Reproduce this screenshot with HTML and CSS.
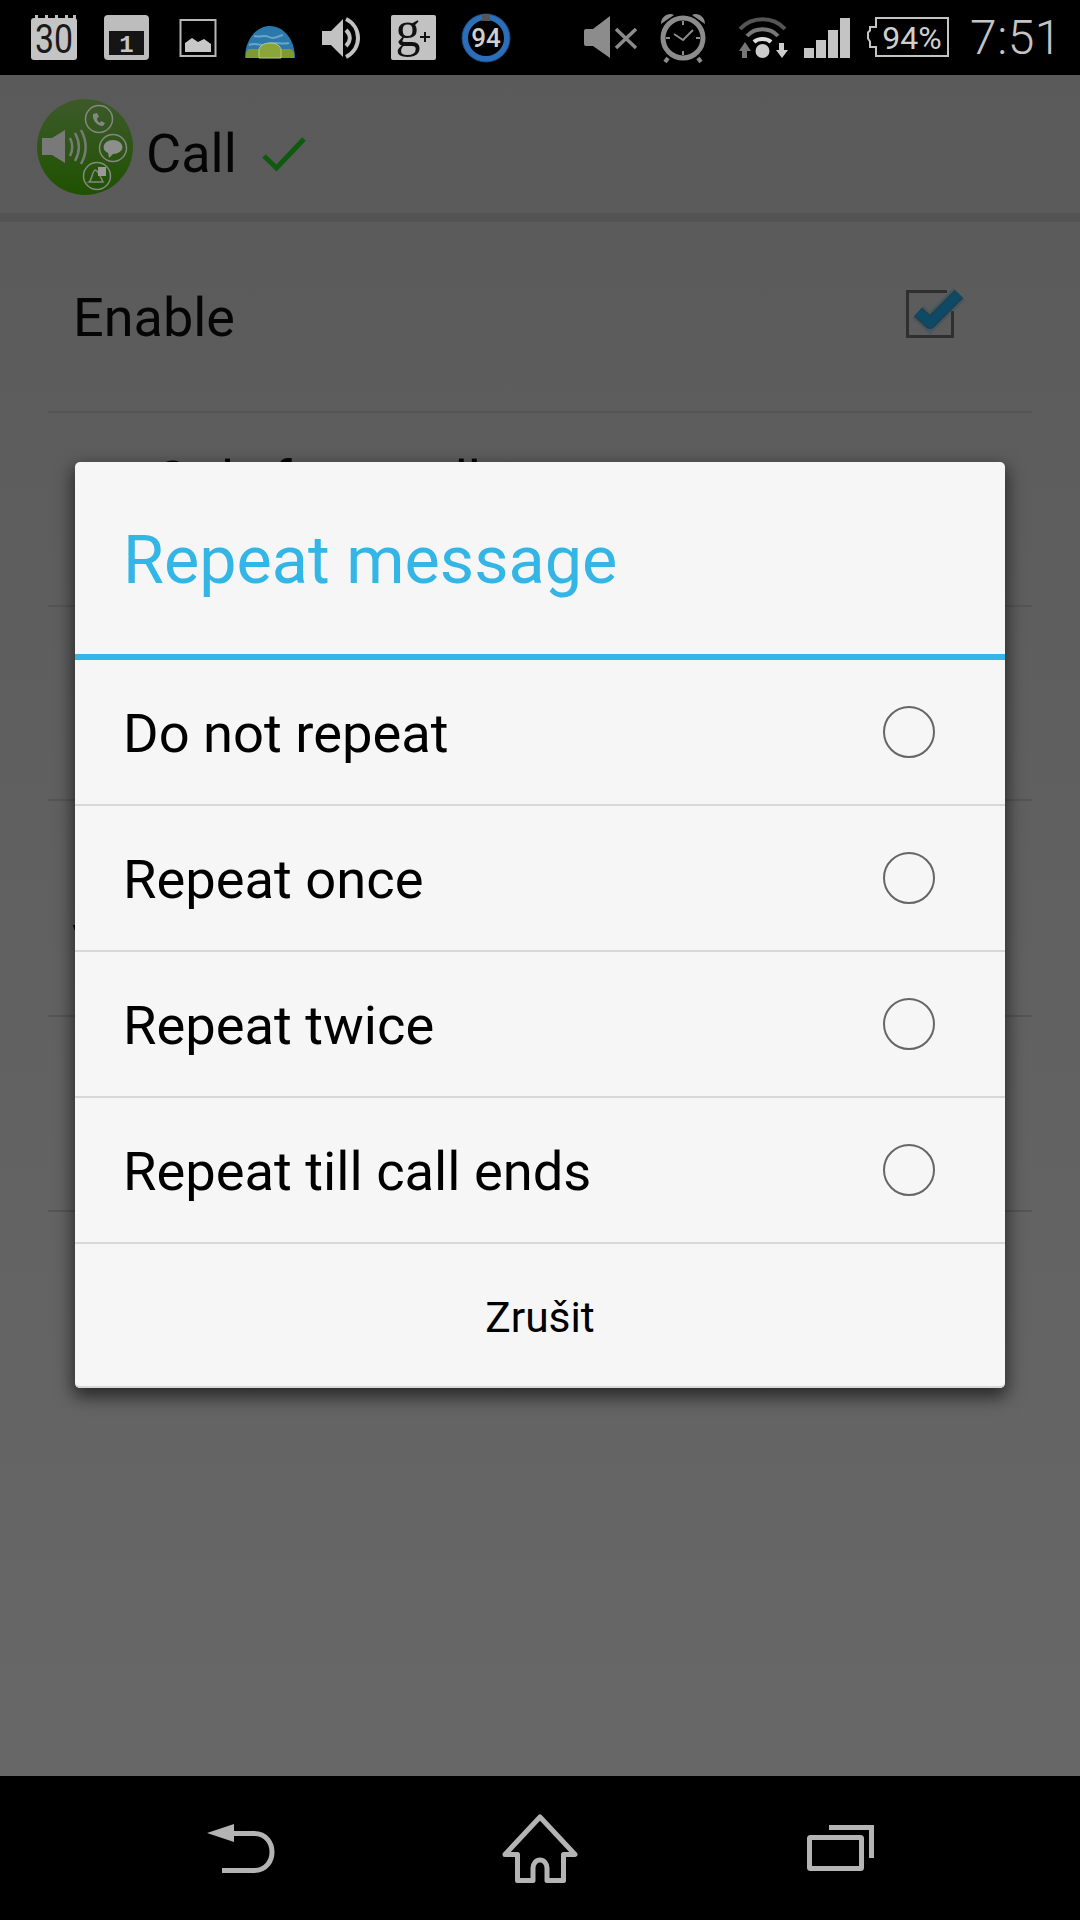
FILE: index.html
```html
<!DOCTYPE html>
<html>
<head>
    <meta charset="UTF-8">
    <meta name="viewport" content="width=device-width, initial-scale=1.0">
    <link rel="stylesheet" href="styles.css">
</head>
<body>
<div class="phone">
    <div class="status-bar">
        <div class="status-group">
            <svg width="72" height="75" viewBox="0 0 72 75">
                <path d="M17 15h3v4h-3zM27 15h3v4h-3zM37 15h3v4h-3zM47 15h3v4h-3zM55 15h3v4h-3z" fill="#bdbdbd"/>
                <rect x="13" y="18" width="46" height="42" rx="3" fill="#c4c4c4"/>
                <text x="36" y="53" class="svg-cal" textLength="38" lengthAdjust="spacingAndGlyphs">30</text>
            </svg>
            <svg width="72" height="75" viewBox="0 0 72 75">
                <rect x="14" y="15" width="45" height="45" rx="4" fill="#bdbdbd"/>
                <rect x="19" y="31" width="35" height="24" fill="#151515"/>
                <text x="36.5" y="52" class="svg-one">1</text>
            </svg>
            <svg width="72" height="75" viewBox="0 0 72 75">
                <rect x="18.500" y="20" width="35" height="36" fill="none" stroke="#b8b8b8" stroke-width="2"/>
                <path d="M23 52V43l7-5 6 4 6-3 7 5v8z" fill="#c8c8c8"/>
            </svg>
            <svg width="72" height="75" viewBox="0 0 72 75">
                <path d="M11 58C11 40 22 26 36 26S61 40 61 58z" fill="#2a78ac"/>
                <path d="M20 36c6 2 10-2 15 1s9-1 14-2M15 45c7-3 12 2 19-1s14 1 21-1" stroke="#6aa5c4" stroke-width="2" fill="none"/>
                <path d="M12 58v-4c0-3 2-5 5-5h38c3 0 5 2 5 5v4z" fill="#7f9a34"/>
                <path d="M25 58V50c0-4 5-7 11-7s11 3 11 7v8z" fill="#8aa53a" stroke="#b7c98a" stroke-width="1"/>
            </svg>
            <svg width="72" height="75" viewBox="0 0 72 75">
                <path d="M16 31h9l12-12v38L25 45h-9z" fill="#c2c2c2"/>
                <path d="M40 30c5 5 5 11 0 16" fill="none" stroke="#c2c2c2" stroke-width="4"/>
                <path d="M40 19c16 8 16 30 0 38" fill="none" stroke="#c2c2c2" stroke-width="4"/>
            </svg>
            <svg width="72" height="75" viewBox="0 0 72 75">
                <rect x="13" y="15" width="45" height="45" rx="2" fill="#c2c2c2"/>
                <text x="30" y="46" class="svg-g">g</text>
                <path d="M42 37h10M47 32v10" stroke="#111" stroke-width="2"/>
            </svg>
            <svg width="72" height="75" viewBox="0 0 72 75">
                <circle cx="36" cy="38" r="21" fill="none" stroke="#2b6fbb" stroke-width="6"/>
                <circle cx="36" cy="38" r="24" fill="none" stroke="#1d4a7c" stroke-width="1"/>
                <path d="M32 14h8v7h-8z" fill="#555"/>
                <text x="36" y="47" class="svg-batt">94</text>
            </svg>
        </div>
        <div class="status-group">
            <svg width="72" height="75" viewBox="0 0 72 75">
                <path d="M9 31q0-2 2-2h7l17-13v42L18 46h-7q-2 0-2-2z" fill="#8c8c8c"/>
                <path d="M41 29l20 19M61 29L41 48" stroke="#8c8c8c" stroke-width="3.500"/>
            </svg>
            <svg width="72" height="75" viewBox="0 0 72 75">
                <circle cx="36" cy="38" r="20" fill="none" stroke="#8c8c8c" stroke-width="5"/>
                <path d="M14 24c0-8 8-12 13-9zM58 24c0-8-8-12-13-9z" fill="#8c8c8c"/>
                <path d="M21 58l-3 4M51 58l3 4" stroke="#8c8c8c" stroke-width="4"/>
                <path d="M27 34l9 6 10-10M36 21v4M36 51v4M19 38h4M49 38h4" fill="none" stroke="#8c8c8c" stroke-width="2"/>
            </svg>
            <svg width="85" height="75" viewBox="0 0 85 75">
                <path d="M21 29c12-13 33-13 45 0" fill="none" stroke="#555" stroke-width="4"/>
                <path d="M28 36c8-9 23-9 31 0" fill="none" stroke="#777" stroke-width="4"/>
                <path d="M35 42c4-4 13-4 17 0" fill="none" stroke="#ddd" stroke-width="4"/>
                <circle cx="43.500" cy="51" r="7" fill="#ccc"/>
                <path d="M26 42l6 9h-4v7h-5v-7h-3z" fill="#777"/>
                <path d="M60 43h5v7h4l-6 8-6-8h3z" fill="#ccc"/>
            </svg>
            <svg class="signal" width="46" height="75" viewBox="0 0 46 75">
                <path d="M0 48h10v10H0zM12 40h10v18H12zM24 30h10v28H24zM36 18h10v40H36z" fill="#c4c4c4"/>
            </svg>
            <svg width="117" height="75" viewBox="0 0 117 75">
                <path d="M26 18h72v38H26V47h-6v-5.500l-2-3v-6l2-2V27h6z" fill="none" stroke="#c4c4c4" stroke-width="2"/>
                <text x="62" y="49" class="svg-pct">94%</text>
            </svg>
            <span class="clock">7:51</span>
        </div>
    </div>

    <div class="screen">
        <div class="app-bar">
            <svg width="96" height="96" viewBox="0 0 96 96">
                <defs>
                    <linearGradient id="appGreen" x1="0" y1="0" x2="0" y2="1">
                        <stop offset="0" stop-color="#3d5a2a"/>
                        <stop offset="1" stop-color="#1f5200"/>
                    </linearGradient>
                </defs>
                <circle cx="48" cy="48" r="48" fill="url(#appGreen)"/>
                <path d="M5 39h10l13-8v33l-13-8H5z" fill="#797979"/>
                <path d="M33 39c3 6 3 12 0 18M38 34c5 9 5 19 0 28M44 31c6 11 6 23 0 34" fill="none" stroke="#797979" stroke-width="2.500"/>
                <g fill="none" stroke="#868686" stroke-width="1.500">
                    <circle cx="62" cy="20" r="13.500"/>
                    <circle cx="76" cy="49" r="13.500"/>
                    <circle cx="60" cy="77" r="13.500"/>
                </g>
                <path d="M56 15c-1 6 4 12 10 12l2-3-4-2-1 2c-2-1-3-3-3-5l2-1-2-4z" fill="#868686"/>
                <ellipse cx="76" cy="48" rx="9.500" ry="7" fill="#8e8e8e"/>
                <path d="M71 53l1 6 5-5z" fill="#8e8e8e"/>
                <path d="M52 83c3-2 3-10 6-12 3 0 5 6 8 12z" fill="none" stroke="#868686" stroke-width="1.500"/>
                <rect x="61" y="68" width="8" height="9" fill="#999"/>
            </svg>
            <span class="app-title">Call</span>
            <svg class="app-check" width="46" height="38" viewBox="0 0 46 38">
                <path d="M3 20l12.500 12L43 3" fill="none" stroke="#0f5a0f" stroke-width="5"/>
            </svg>
        </div>

        <div class="settings">
            <div class="setting">
                <span class="setting-label setting-label-main">Enable</span>
                <svg class="setting-check" width="70" height="70" viewBox="0 0 70 70">
                    <path d="M47 10.500H7.500v45h45V30" fill="none" stroke="#2f2f2f" stroke-width="3"/>
                    <path d="M18 31l12 11 29-29" fill="none" stroke="#0f4f6e" stroke-opacity=".3" stroke-width="17"/>
                    <path d="M18 31l12 11 29-29" fill="none" stroke="#2a3c46" stroke-width="12" stroke-linejoin="round"/>
                    <path d="M18 31l12 11 29-29" fill="none" stroke="#0c4a68" stroke-width="9"/>
                </svg>
            </div>
            <div class="setting setting-peek">
                <span class="setting-label">Only for a call</span>
            </div>
            <div class="setting"></div>
            <div class="setting setting-low">
                <span class="setting-label">Volume</span>
            </div>
            <div class="setting"></div>
        </div>
    </div>

    <div class="nav-bar">
        <svg width="120" height="144" viewBox="0 0 120 144">
            <path d="M27 57l27-9v18z" fill="#b4b4b4"/>
            <path d="M52 57.500H74C87 57.500 92 68 92 76S87 94.500 74 94.500H42" fill="none" stroke="#b4b4b4" stroke-width="5"/>
        </svg>
        <svg width="120" height="144" viewBox="0 0 120 144">
            <path d="M60 41L95 78.500H83.500V104.500H67V92A7 8 0 0 0 53 92V104.500H37.500V78.500H25Z" fill="none" stroke="#b4b4b4" stroke-width="5" stroke-linejoin="round"/>
        </svg>
        <svg width="120" height="144" viewBox="0 0 120 144">
            <rect x="29.500" y="61.500" width="52" height="31" rx="1" fill="none" stroke="#b4b4b4" stroke-width="5"/>
            <path d="M49 51.500H91.500V82" fill="none" stroke="#b4b4b4" stroke-width="5"/>
        </svg>
    </div>

    <div class="dialog">
        <div class="dialog-title">Repeat message</div>
        <div class="dialog-option"><span>Do not repeat</span><i class="radio"></i></div>
        <div class="dialog-option"><span>Repeat once</span><i class="radio"></i></div>
        <div class="dialog-option"><span>Repeat twice</span><i class="radio"></i></div>
        <div class="dialog-option"><span>Repeat till call ends</span><i class="radio"></i></div>
        <div class="dialog-cancel">Zrušit</div>
    </div>
</div>
</body>
</html>
```
FILE: styles.css
```css
body {
    margin: 0;
    background-color: #000;
    font-family: Roboto, "Noto Sans", sans-serif;
}
svg {
    display: block;
    flex: none;
}
.phone {
    position: relative;
    display: flex;
    flex-direction: column;
    width: 1080px;
    height: 1920px;
    overflow: hidden;
}

/* status bar */
.status-bar {
    display: flex;
    justify-content: space-between;
    height: 75px;
    padding-left: 18px;
    background-color: #000;
}
.status-group {
    display: flex;
    align-items: center;
}
.clock {
    width: 110px;
    padding-left: 3px;
    color: #c4c4c4;
    font-size: 48px;
    font-weight: 300;
    letter-spacing: 0.5px;
}
.svg-cal {
    fill: #1a1a1a;
    font-size: 40px;
    text-anchor: middle;
}
.svg-one {
    fill: #c4c4c4;
    font-family: "Liberation Mono", monospace;
    font-size: 24px;
    font-weight: bold;
    text-anchor: middle;
}
.svg-g {
    fill: #111;
    font-family: "Liberation Serif", serif;
    font-size: 50px;
    text-anchor: middle;
}
.svg-batt {
    fill: #d0d0d0;
    font-size: 26px;
    font-weight: 500;
    text-anchor: middle;
}
.svg-pct {
    fill: #cfcfcf;
    font-size: 32px;
    text-anchor: middle;
}

/* dimmed screen behind the dialog */
.screen {
    flex: 1;
    color: #050505;
    background: linear-gradient(#5a5a5a, #676767);
}
.app-bar {
    display: flex;
    align-items: center;
    box-sizing: border-box;
    height: 147px;
    padding: 6px 0 0 37px;
    border-bottom: 9px solid #535353;
}
.app-title {
    margin-left: 13px;
    margin-top: 12px;
    font-size: 54px;
}
.app-check {
    margin-left: 24px;
    margin-top: 16px;
}
.settings {
    display: grid;
    grid-template-rows: 191px 194px 194px 216px 195px;
    margin: 0 48px;
}
.setting {
    display: flex;
    align-items: center;
    justify-content: space-between;
    padding: 0 62px 0 25px;
    border-bottom: 2px solid #555;
}
.setting-label {
    font-size: 54px;
}
.setting-label-main {
    margin-top: 1px;
}
.setting-check {
    margin-top: -1px;
}
.setting-peek {
    align-items: flex-start;
    padding-top: 36px;
    padding-left: 106px;
}
.setting-low {
    align-items: flex-start;
    padding-top: 112px;
    padding-left: 24px;
}

/* bottom keys */
.nav-bar {
    display: flex;
    justify-content: center;
    gap: 180px;
    height: 144px;
    background-color: #000;
}

/* dialog */
.dialog {
    position: absolute;
    left: 75px;
    top: 462px;
    width: 930px;
    background-color: #f6f6f6;
    border-radius: 5px;
    box-shadow: 0 7px 17px 2px rgba(0, 0, 0, 0.6);
    color: #000;
}
.dialog-title {
    display: flex;
    align-items: center;
    box-sizing: border-box;
    height: 198px;
    padding: 4px 48px 0;
    border-bottom: 6px solid #33b5e5;
    color: #33b5e5;
    font-size: 66.5px;
}
.dialog-option {
    display: flex;
    align-items: center;
    justify-content: space-between;
    box-sizing: border-box;
    height: 146px;
    padding: 0 70px 0 48px;
    border-bottom: 2px solid #d8d8d8;
    font-size: 54.3px;
}
.dialog-option span {
    padding-top: 2px;
}
.radio {
    box-sizing: border-box;
    width: 52px;
    height: 52px;
    border: 2px solid #666;
    border-radius: 50%;
}
.dialog-cancel {
    display: flex;
    align-items: center;
    justify-content: center;
    box-sizing: border-box;
    height: 144px;
    padding-top: 4px;
    border-bottom: 2px solid #d8d8d8;
    border-radius: 0 0 5px 5px;
    font-size: 42.5px;
}
```
